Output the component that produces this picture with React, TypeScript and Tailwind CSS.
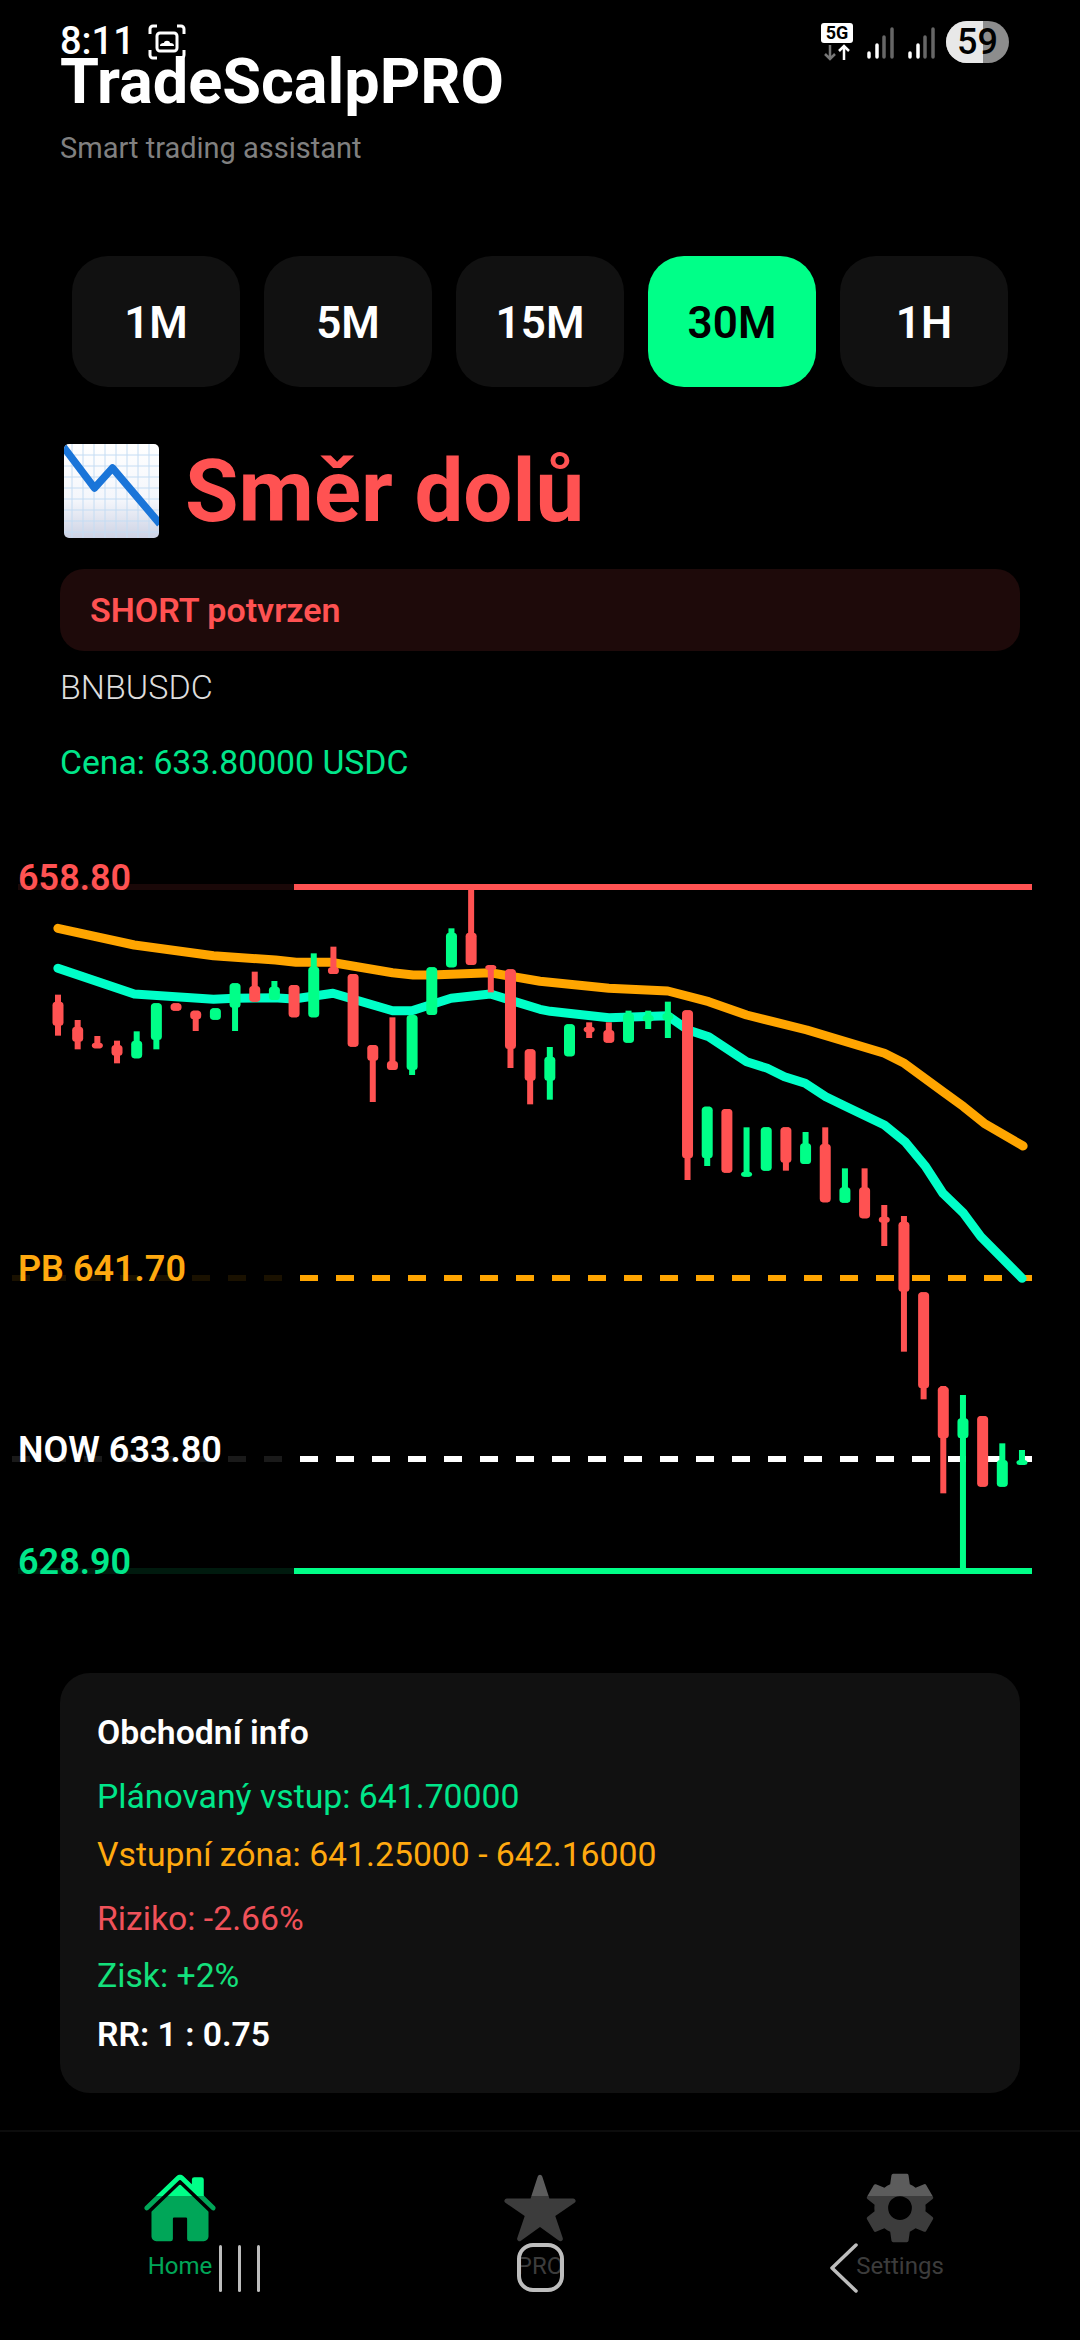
import { IoHome, IoStar, IoSettingsSharp } from "react-icons/io5";

const R = "#ff5252";
const G = "#00ff88";
type C = [number, number, number, number, number, number];
// [x, wickTop, wickBottom, bodyTop, bodyBottom, green?1:0] in px relative to the chart
const a = (z: number) => z / 3;
const b = (z: number) => 350 + z / 3;
const raw: [number, number, number, number, number, number][] = [
  [a(434), a(557), a(455), a(527), 0, 0],
  [a(510), a(598), a(530), a(575), 0, 0],
  [a(558), a(595), a(578), a(595), 0, 0],
  [a(572), a(640), a(585), a(617), 0, 0],
  [a(544), a(625), a(572), a(625), 1, 0],
  [a(460), a(598), a(460), a(570), 1, 0],
  [a(460), a(482), a(460), a(482), 0, 0],
  [a(482), a(543), a(482), a(508), 0, 0],
  [a(475), a(509), a(475), a(509), 1, 0],
  [a(400), a(543), a(400), a(473), 1, 0],
  [a(365), a(455), a(408), a(455), 0, 0],
  [a(393), a(450), a(410), a(450), 1, 0],
  [a(405), a(502), a(405), a(502), 0, 0],
  [a(310), a(502), a(350), a(502), 1, 0],
  [a(290), a(372), a(352), a(372), 0, 0],
  [a(372), a(590), a(372), a(590), 0, 0],
  [a(585), a(756), a(585), a(632), 0, 0],
  [a(502), a(660), a(633), a(660), 0, 0],
  [a(495), a(675), a(495), a(660), 1, 0],
  [a(352), a(495), a(352), a(495), 1, 0],
  [a(235), a(352), a(248), a(352), 1, 0],
  [a(118), a(345), a(248), a(345), 0, 0],
  [a(345), a(427), a(345), a(358), 0, 0],
  [a(358), a(654), a(358), a(597), 0, 0],
  [a(598), a(763), a(598), a(692), 0, 0],
  [a(591), a(749), a(620), a(692), 1, 0],
  [a(523), a(619), a(523), a(619), 1, 0],
  [a(517), a(564), a(530), a(547), 0, 0],
  [a(517), a(578), a(540), a(578), 0, 0],
  [a(482), a(578), a(490), a(578), 1, 0],
  [a(482), a(537), a(495), a(515), 1, 0],
  [a(455), a(564), a(490), a(510), 1, 0],
  [a(481), a(990), a(481), a(925), 0, 0],
  [a(770), a(948), a(770), a(925), 1, 0],
  [a(777), a(968), a(777), a(968), 0, 0],
  [a(832), a(980), a(965), a(980), 1, 0],
  [a(832), a(962), a(832), a(962), 1, 0],
  [a(832), a(962), a(832), a(938), 0, 0],
  [a(846), a(942), a(880), a(942), 1, 0],
  [a(832), b(7), a(882), b(7), 0, 0],
  [a(955), b(8), a(1012), b(8), 1, 0],
  [a(955), b(55), a(1012), b(55), 0, 0],
  [b(15), b(138), b(50), b(68), 0, 0],
  [b(48), b(455), b(65), b(275), 0, 0],
  [b(277), b(598), b(277), b(565), 0, 0],
  [b(558), b(880), b(560), b(715), 0, 0],
  [b(585), b(1105), b(655), b(715), 1, 0],
  [b(648), b(860), b(648), b(860), 0, 0],
  [b(730), b(860), b(780), b(860), 1, 0],
  [b(750), b(795), b(780), b(795), 1, 0],
];
const candles: C[] = raw.map((r, i) => [58 + i * 19.673, r[0], r[1], r[2], r[3], r[4]]);

const p3 = (pts: number[][]) => pts.map(([x, y]) => [x / 2.904, y / 3]);
const p4 = (pts: number[][]) => pts.map(([x, y]) => [540 + x / 2.904, y / 3]);
const orange = [
  ...p3([[168,235],[390,285],[620,317],[800,330],[860,337],[960,337],[1140,368],[1200,375],[1253,375],[1424,368]]),
  ...p4([[0,394],[200,415],[371,423],[490,455],[600,495],[775,540],[1000,610],[1055,638],[1170,725],[1230,770],[1290,820],[1403,888]]),
];
const teal = [
  ...p3([[168,355],[390,432],[620,448],[682,445],[796,443],[853,447],[967,430],[1140,482],[1196,482],[1310,445],[1424,432]]),
  ...p4([[0,478],[30,484],[200,503],[371,497],[430,540],[490,560],[600,635],[660,655],[710,680],[770,700],[830,740],[885,768],[1000,825],[1060,875],[1120,950],[1170,1030],[1230,1090],[1280,1160],[1400,1285]]),
];
const pts = (l: number[][]) => l.map(([x, y]) => `${x.toFixed(1)},${y.toFixed(1)}`).join(" ");

function Level({ y, color, dashed }: { y: number; color: string; dashed?: boolean }) {
  const d = dashed ? "18 18" : undefined;
  return (
    <>
      <line x1={dashed ? 12 : 18} x2={294} y1={y} y2={y} stroke={color} strokeWidth={6} strokeDasharray={d} opacity={0.1} />
      <line x1={dashed ? 300 : 294} x2={1032} y1={y} y2={y} stroke={color} strokeWidth={6} strokeDasharray={d} />
    </>
  );
}

function Emoji() {
  const xs = [8, 19, 30, 41, 52, 63, 74, 85];
  return (
    <svg width="95" height="94" viewBox="0 0 95 94" className="shrink-0">
      <defs>
        <linearGradient id="em" x1="0" y1="0" x2="0" y2="1">
          <stop offset="0" stopColor="#ffffff" />
          <stop offset="0.6" stopColor="#f4f6fb" />
          <stop offset="1" stopColor="#ccd2e4" />
        </linearGradient>
        <clipPath id="emc"><rect width="95" height="94" rx="5" /></clipPath>
      </defs>
      <g clipPath="url(#emc)">
        <rect width="95" height="94" fill="url(#em)" />
        {xs.map((x) => <line key={x} x1={x} x2={x} y1={0} y2={94} stroke="#c4dcf3" strokeWidth={1} />)}
        {xs.map((x) => <line key={x} x1={0} x2={95} y1={x + 3} y2={x + 3} stroke="#c4dcf3" strokeWidth={1} />)}
        <polyline points="-2,1 30.5,44 48.5,24 96,80" fill="none" stroke="#1a75d9" strokeWidth={7.5} strokeLinejoin="round" />
      </g>
    </svg>
  );
}

function StatusBar() {
  return (
    <div className="absolute left-0 top-0 w-full h-[70px] text-white">
      <span className="absolute left-[60px] top-[19px] text-[38px] leading-[44px] font-medium">8:11</span>
      <svg className="absolute left-[148px] top-[24px]" width="38" height="36" viewBox="0 0 38 36" fill="none" stroke="#fff" strokeWidth="3">
        <path d="M9 2H5a3 3 0 0 0-3 3v5M29 2h4a3 3 0 0 1 3 3v5M9 34H5a3 3 0 0 1-3-3v-5M29 34h4a3 3 0 0 0 3-3v-5" />
        <rect x="9" y="9" width="20" height="18" rx="3" />
        <path d="M12 22c0-3 3-3 4-3 0-3 6-3 6 0 3 0 4 1 4 3z" fill="#fff" stroke="none" />
      </svg>
      <svg className="absolute left-[820px] top-[22px]" width="36" height="40" viewBox="0 0 36 40">
        <rect x="1" y="1" width="32" height="20" rx="3" fill="#fff" />
        <text x="17" y="17" textAnchor="middle" fontFamily="Roboto, sans-serif" fontWeight="700" fontSize="18" fill="#000">5G</text>
        <path d="M10 23v14M5 32l5 5 5-5" stroke="#777" strokeWidth="2.5" fill="none" />
        <path d="M24 38V24M19 29l5-5 5 5" stroke="#fff" strokeWidth="2.5" fill="none" />
      </svg>
      <svg className="absolute left-[864px] top-[26px]" width="76" height="34" viewBox="0 0 76 34" strokeWidth="3.5" strokeLinecap="round">
        <line x1="5" x2="5" y1="27" y2="31" stroke="#fff" />
        <line x1="13" x2="13" y1="19" y2="31" stroke="#fff" />
        <line x1="20" x2="20" y1="11" y2="31" stroke="#666" />
        <line x1="28" x2="28" y1="3" y2="31" stroke="#666" />
        <line x1="46" x2="46" y1="27" y2="31" stroke="#fff" />
        <line x1="54" x2="54" y1="19" y2="31" stroke="#fff" />
        <line x1="61" x2="61" y1="11" y2="31" stroke="#666" />
        <line x1="69" x2="69" y1="3" y2="31" stroke="#666" />
      </svg>
      <div className="absolute left-[946px] top-[21px] w-[63px] h-[42px] rounded-full overflow-hidden bg-[#8d8d8d] flex items-center justify-center">
        <div className="absolute left-0 top-0 h-full w-[37px] bg-[#e8e8e8]" />
        <span className="relative text-black font-medium text-[36px] leading-none">59</span>
      </div>
    </div>
  );
}

function Label({ children, top, color }: { children: string; top: number; color: string }) {
  return (
    <span className="absolute left-[18px] text-[36px] leading-[40px] font-semibold whitespace-nowrap" style={{ top, color }}>
      {children}
    </span>
  );
}

export default function App() {
  const tabs = ["1M", "5M", "15M", "30M", "1H"];
  return (
    <div className="relative w-[1080px] h-[2340px] bg-black overflow-hidden flex flex-col" style={{ fontFamily: "Roboto, sans-serif" }}>
      <header className="pt-[47px] px-[60px]">
        <h1 className="text-[63px] leading-[70px] font-bold text-white">TradeScalpPRO</h1>
        <p className="mt-[11px] text-[29px] leading-[40px] text-[#808080]">Smart trading assistant</p>
      </header>

      <div className="mt-[88px] px-[72px] flex gap-[24px]">
        {tabs.map((t) => (
          <div
            key={t}
            className={`w-[168px] h-[131px] rounded-[36px] flex items-center justify-center text-[44px] font-semibold pt-[2px] ${t === "30M" ? "bg-[#00ff88] text-black" : "bg-[#111111] text-white"}`}
          >
            {t}
          </div>
        ))}
      </div>

      <div className="mt-[54px] pl-[64px] h-[100px] flex items-center gap-[26px]">
        <Emoji />
        <span className="text-[87px] leading-[100px] font-bold text-[#ff5252]">Směr dolů</span>
      </div>

      <div className="mt-[28px] mx-[60px] h-[82px] rounded-[24px] bg-[#1e0a0a] px-[30px] flex items-center">
        <span className="text-[34px] font-semibold text-[#ff5252] leading-[40px]">SHORT potvrzen</span>
      </div>

      <p className="mt-[16px] px-[60px] text-[34px] leading-[40px] font-light text-[#dddddd]">BNBUSDC</p>
      <p className="mt-[36px] px-[60px] text-[33.75px] leading-[40px] text-[#00e68a]">Cena: 633.80000 USDC</p>

      <div className="relative mt-[67px] h-[750px] w-full">
        <svg width="1080" height="750" viewBox="0 0 1080 750" className="absolute inset-0">
          <Level y={37} color={R} />
          <Level y={428} color="#ffa500" dashed />
          <Level y={609} color="#ffffff" dashed />
          <Level y={721} color={G} />
          <polyline points={pts(orange)} fill="none" stroke="#ffa500" strokeWidth={9} strokeLinecap="round" strokeLinejoin="round" />
          <polyline points={pts(teal)} fill="none" stroke="#00ffc8" strokeWidth={9} strokeLinecap="round" strokeLinejoin="round" />
          {candles.map(([x, wt, wb, bt, bb, g], i) => {
            const col = g ? G : R;
            return (
              <g key={i} fill={col}>
                <rect x={x - 3} y={wt} width={6} height={wb - wt} />
                <rect x={x - 5.5} y={bt} width={11} height={Math.max(bb - bt, 5)} rx={3.5} />
              </g>
            );
          })}
        </svg>
        <Label top={8} color={R}>658.80</Label>
        <Label top={399} color="#ffa90f">PB 641.70</Label>
        <Label top={580} color="#ffffff">NOW 633.80</Label>
        <Label top={692} color="#00e68a">628.90</Label>
      </div>

      <div className="mt-[73px] mx-[60px] h-[420px] rounded-[30px] bg-[#111111] pt-[40px] px-[37px] text-[33.75px] leading-[40px]">
        <p className="font-semibold text-white">Obchodní info</p>
        <p className="mt-[24px] text-[#00e68a]">Plánovaný vstup: 641.70000</p>
        <p className="mt-[18px] text-[#ffa90f]">Vstupní zóna: 641.25000 - 642.16000</p>
        <p className="mt-[24px] text-[#f0525a]">Riziko: -2.66%</p>
        <p className="mt-[17px] text-[#14e07c]">Zisk: +2%</p>
        <p className="mt-[19px] font-semibold text-white">RR: 1 : 0.75</p>
      </div>

      <nav className="mt-[37px] flex-1 border-t-2 border-[#0c0c0c] grid grid-cols-3 relative">
        {[
          { n: "Home", I: IoHome, c: "#00ff88" },
          { n: "PRO", I: IoStar, c: "#5c5c5c" },
          { n: "Settings", I: IoSettingsSharp, c: "#5c5c5c" },
        ].map(({ n, I, c }) => (
          <div key={n} className="flex flex-col items-center pt-[38px]">
            <I size={76} color={c} />
            <span className="mt-[4px] text-[24px] leading-[32px]" style={{ color: c }}>{n}</span>
          </div>
        ))}
        <div className="absolute left-0 right-0 top-[64px] bottom-0 bg-black/35" />
        <div className="absolute left-[219px] top-[113px] w-[3px] h-[47px] rounded-full bg-[#bdbdbd]" />
        <div className="absolute left-[238px] top-[113px] w-[3px] h-[47px] rounded-full bg-[#bdbdbd]" />
        <div className="absolute left-[257px] top-[113px] w-[3px] h-[47px] rounded-full bg-[#bdbdbd]" />
        <div className="absolute left-[517px] top-[111px] w-[47px] h-[49px] rounded-[16px] border-[4px] border-[#bdbdbd]" />
        <svg className="absolute left-[827px] top-[110px]" width="34" height="52" viewBox="0 0 34 52" fill="none" stroke="#bdbdbd" strokeWidth="3.5" strokeLinecap="round" strokeLinejoin="round">
          <path d="M29 3 5 26l24 23" />
        </svg>
      </nav>

      <StatusBar />
    </div>
  );
}
